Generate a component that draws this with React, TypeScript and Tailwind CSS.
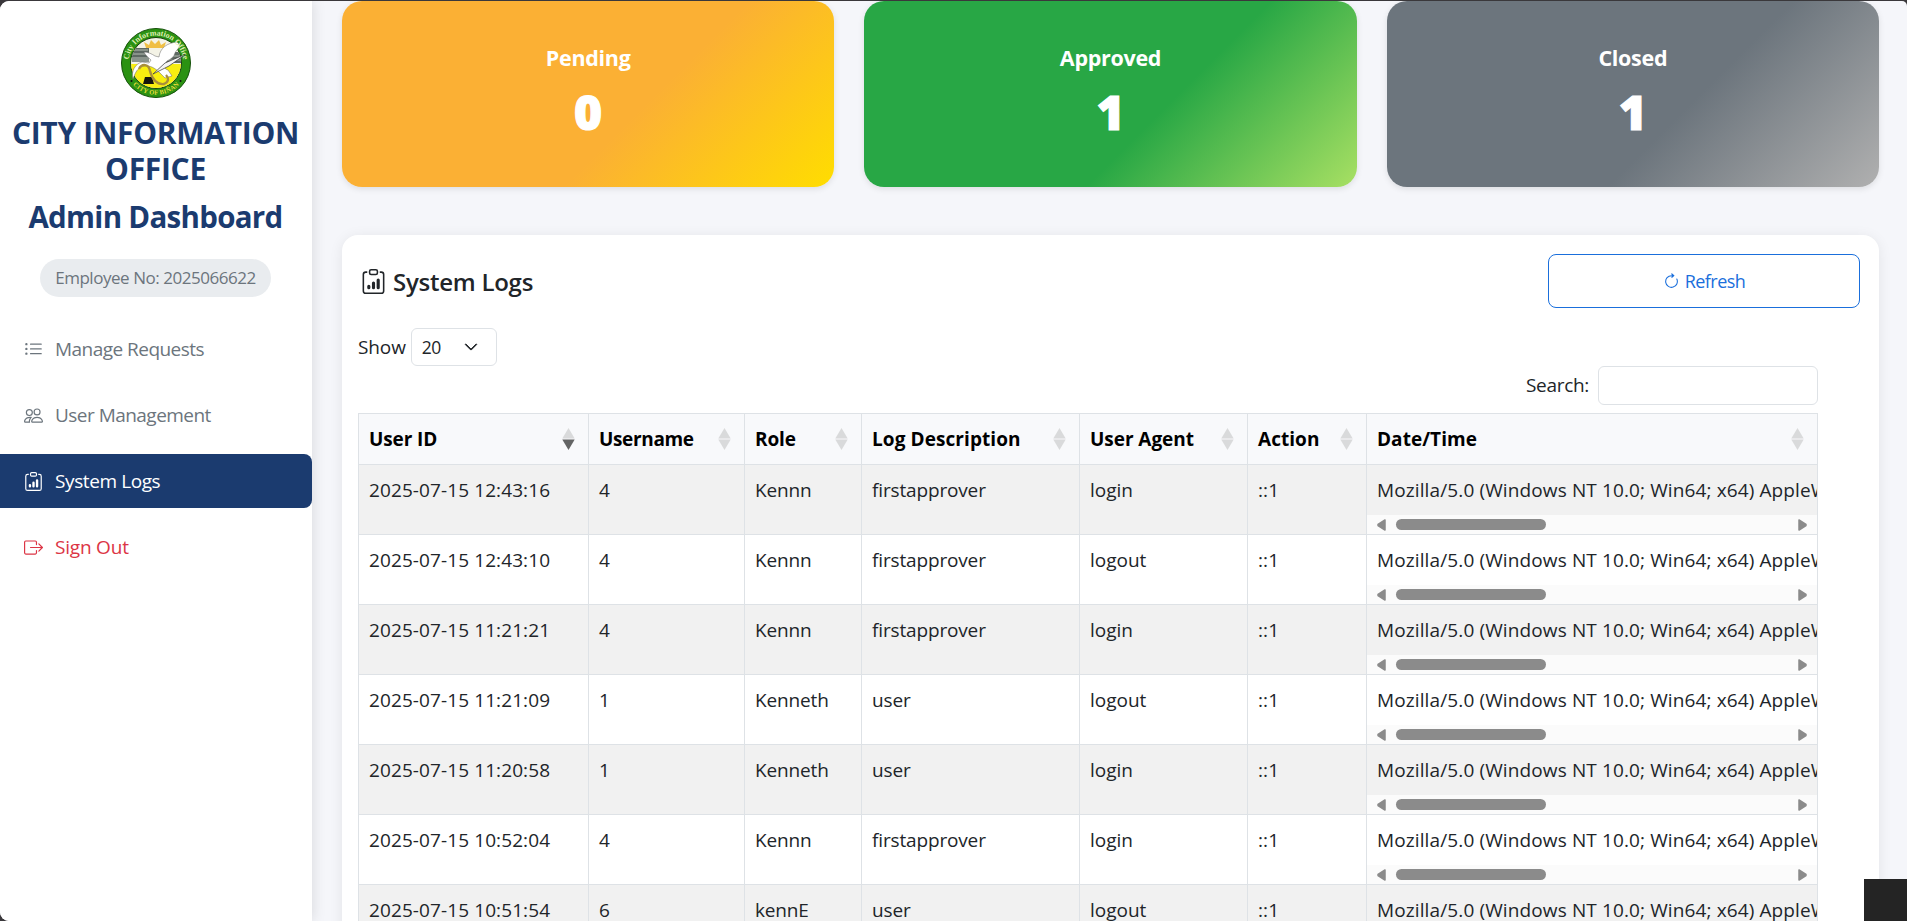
import React from 'react';
import { BsListUl, BsPeople, BsClipboardData, BsBoxArrowRight, BsArrowClockwise, BsChevronDown } from 'react-icons/bs';

const agent = 'Mozilla/5.0 (Windows NT 10.0; Win64; x64) AppleWebKit/537.36';

const rows = [
  ['2025-07-15 12:43:16', '4', 'Kennn', 'firstapprover', 'login', '::1'],
  ['2025-07-15 12:43:10', '4', 'Kennn', 'firstapprover', 'logout', '::1'],
  ['2025-07-15 11:21:21', '4', 'Kennn', 'firstapprover', 'login', '::1'],
  ['2025-07-15 11:21:09', '1', 'Kenneth', 'user', 'logout', '::1'],
  ['2025-07-15 11:20:58', '1', 'Kenneth', 'user', 'login', '::1'],
  ['2025-07-15 10:52:04', '4', 'Kennn', 'firstapprover', 'login', '::1'],
  ['2025-07-15 10:51:54', '6', 'kennE', 'user', 'logout', '::1'],
];

const cellTracking = [
  'tracking-[0.1px]',
  '',
  'tracking-[-0.15px]',
  'tracking-[-0.15px]',
  '',
  'tracking-[0.1px]',
];

const columns = [
  { label: 'User ID', tracking: 'tracking-[-0.1px]' },
  { label: 'Username', tracking: 'tracking-[-0.35px]' },
  { label: 'Role', tracking: 'tracking-[-0.1px]' },
  { label: 'Log Description', tracking: 'tracking-[0.08px]' },
  { label: 'User Agent', tracking: 'tracking-[-0.05px]' },
  { label: 'Action', tracking: 'tracking-[0.05px]' },
  { label: 'Date/Time', tracking: 'tracking-[0.05px]' },
];

const grid = 'grid grid-cols-[230px_156px_117px_218px_168px_119px_451px]';

function Seal() {
  return (
    <svg viewBox="0 0 70 70" className="h-[70px] w-[70px]">
      <defs>
        <path id="arcTop" d="M 7.5 35 A 27.5 27.5 0 0 1 62.5 35" />
        <path id="arcBottom" d="M 3.2 35 A 31.8 31.8 0 0 0 66.8 35" />
        <clipPath id="inner"><circle cx="35" cy="35" r="25" /></clipPath>
      </defs>
      <circle cx="35" cy="35" r="34.5" fill="#2b9212" stroke="#14500a" strokeWidth="1" />
      <circle cx="35" cy="35" r="25.5" fill="#f4f3e6" stroke="#173f0c" strokeWidth="1" />
      <g clipPath="url(#inner)">
        <rect x="8" y="36" width="54" height="28" fill="#f8ee10" />
        <path d="M25 20 L23 14 L28 17 L30 12 L34 16 L38 12 L40 17 L45 14 L43 20 Z" fill="#f0bf45" />
        <rect x="11" y="20" width="17" height="9" fill="#5d6862" />
        <rect x="11" y="29" width="17" height="5" fill="#8a948c" />
        <rect x="42" y="24" width="18" height="11" fill="#5d6862" />
        <path d="M12 22h15M12 26h15M43 28h17M43 32h17" stroke="#b5bdb2" strokeWidth="1" />
        <path d="M22 56 L24 49 L31 49 L33 56 Z" fill="#15150c" />
      </g>
      <path d="M12 51 C10 43 14 36 21 34 L28 35 L30 32 C27 29 24 27 23 24 C27 24 31 26 34 28 L38 29 C39 20 46 15 56 14 L59 17 C58 21 55 22 54 25 C53 29 50 31 46 33 C44 37 41 40 47 42 L51 48 L44 50 L38 44 C33 39 26 36 20 39 C15 42 14 46 12 51 Z" fill="#fff" stroke="#666" strokeWidth=".5" />
      <path d="M18 41 C21 35 28 36 29 43 C31 51 36 57 43 56 C48 54 48 50 45 47" fill="none" stroke="#a98f3c" strokeWidth="2.4" />
      <path d="M32 46 L44 35 L65 26 L48 38 Z" fill="#f4f4f4" stroke="#333" strokeWidth=".7" />
      <circle cx="10.500" cy="53" r="1" fill="#111" />
      <circle cx="59.500" cy="53" r="1" fill="#111" />
      <text fontFamily="Liberation Serif, serif" fontSize="8" fontWeight="700" fill="#dfeeb0">
        <textPath href="#arcTop" startOffset="50%" textAnchor="middle" textLength="80">City Information Office</textPath>
      </text>
      <text fontFamily="Liberation Serif, serif" fontSize="6.500" fontWeight="700" fill="#e6dc3a">
        <textPath href="#arcBottom" startOffset="50%" textAnchor="middle" textLength="52">CITY OF BIÑAN</textPath>
      </text>
    </svg>
  );
}

function SortIcon({ active }: { active?: boolean }) {
  return (
    <svg viewBox="0 0 13 22" className="h-[22px] w-[13px] shrink-0">
      <path d="M6.500 0 L12.700 10.500 H.3 Z" fill="#d9dadb" />
      <path d="M6.500 22 L12.700 11.500 H.3 Z" fill={active ? '#636464' : '#d9dadb'} />
    </svg>
  );
}

function ScrollBar() {
  return (
    <div className="flex h-[19px] items-center bg-[#fbfbfb] pr-[10px] pl-[10px] text-[#8b8b8b]">
      <svg viewBox="0 0 9 12" className="h-3 w-[9px]"><path d="M8 1 V11 L1 6.500 V5.500 Z" fill="currentColor" stroke="currentColor" strokeWidth="1.500" strokeLinejoin="round" /></svg>
      <div className="ml-[10px] h-[11px] w-[150px] rounded-full bg-[#8b8b8b]" />
      <svg viewBox="0 0 9 12" className="ml-auto h-3 w-[9px]"><path d="M1 1 V11 L8 6.500 V5.500 Z" fill="currentColor" stroke="currentColor" strokeWidth="1.500" strokeLinejoin="round" /></svg>
    </div>
  );
}

function NavItem({ icon, label, className }: { icon: React.ReactNode; label: string; className: string }) {
  return (
    <a className={`flex h-[54px] items-center gap-3 rounded-r-lg pl-6 text-[19px] ${className}`}>
      {icon}
      <span className="pt-px">{label}</span>
    </a>
  );
}

function StatCard({ label, value, className }: { label: string; value: string; className: string }) {
  return (
    <div className={`flex h-[186px] flex-col items-center rounded-[20px] pt-[40px] text-white shadow-[0_2px_6px_rgba(0,0,0,0.1)] ${className}`}>
      <div className="text-[21.500px] leading-[33px] font-bold tracking-[-0.3px]">{label}</div>
      <div className="mt-2 text-[48px] leading-[60px] font-extrabold [-webkit-text-stroke:1.2px_white]">{value}</div>
    </div>
  );
}

export default function App() {
  return (
    <div className="h-[921px] w-[1907px] overflow-hidden bg-[#3a383b] pt-px font-['Open_Sans','Noto_Sans',sans-serif] text-[#212529]">
      <div className="relative flex h-[920px] overflow-hidden rounded-tl-[9px] rounded-tr-[5px] rounded-bl-[9px] bg-[#f5f6fa]">
        <aside className="z-10 flex w-[312px] shrink-0 flex-col bg-white shadow-[2px_0_12px_rgba(0,0,0,0.1)]">
          <div className="flex flex-col items-center pr-px pt-[27px] text-[#1b3b6f]">
            <Seal />
            <h2 className="mt-[17px] text-center text-[30px] leading-9 font-bold tracking-[-0.3px] whitespace-nowrap">CITY INFORMATION<br />OFFICE</h2>
            <h2 className="mt-3 text-[29.500px] leading-9 font-bold tracking-[-0.7px] whitespace-nowrap">Admin Dashboard</h2>
            <div className="mt-6 flex h-[38px] w-[231px] items-center justify-center rounded-full bg-[#e9ecef] text-[17px] tracking-[-0.46px] whitespace-nowrap text-[#6c757d]">Employee No: 2025066622</div>
          </div>
          <nav className="mt-[25px] flex flex-col gap-3">
            <NavItem icon={<BsListUl className="h-[19px] w-[19px]" />} label="Manage Requests" className="tracking-[-0.53px] text-[#6c757d]" />
            <NavItem icon={<BsPeople className="h-[19px] w-[19px]" />} label="User Management" className="tracking-[-0.53px] text-[#6c757d]" />
            <NavItem icon={<BsClipboardData className="h-[19px] w-[19px]" />} label="System Logs" className="bg-[#1b3b6f] tracking-[-0.4px] text-white" />
            <NavItem icon={<BsBoxArrowRight className="h-[19px] w-[19px]" />} label="Sign Out" className="tracking-[-0.2px] text-[#dc3545]" />
          </nav>
        </aside>

        <main className="flex min-w-0 flex-1 flex-col pr-7 pl-[30px]">
          <div className="grid grid-cols-3 gap-[30px]">
            <StatCard label="Pending" value="0" className="bg-[linear-gradient(135deg,#fbb034_60%,#ffdd00_100%)]" />
            <StatCard label="Approved" value="1" className="bg-[linear-gradient(135deg,#28a745_60%,#a8e063_100%)]" />
            <StatCard label="Closed" value="1" className="bg-[linear-gradient(135deg,#6c757d_60%,#b0b0b0_100%)]" />
          </div>

          <section className="mt-12 h-[740px] shrink-0 rounded-t-[16px] bg-white pt-[19px] pr-[19px] pl-4 shadow-[0_2px_14px_rgba(0,0,0,0.08)]">
            <div className="flex items-center justify-between">
              <h4 className="flex items-center gap-[7px] pl-[3px] text-[24px] font-semibold tracking-[-0.25px]">
                <BsClipboardData className="h-[25px] w-[25px]" />
                <span className="pt-px">System Logs</span>
              </h4>
              <button className="flex h-[54px] w-[312px] items-center justify-center gap-[5px] rounded-lg border border-[#1a6fdc] text-[18px] tracking-[-0.55px] text-[#1a6fdc]">
                <BsArrowClockwise className="h-[17px] w-[17px]" />
                <span>Refresh</span>
              </button>
            </div>
            <div className="mt-5 flex h-[38px] items-center gap-[5px] text-[19px]">
              <span className="tracking-[-0.1px]">Show</span>
              <div className="flex h-[38px] w-[86px] items-center justify-between rounded-md border border-[#dee2e6] pr-[18px] pl-[10px] text-[17.500px] tracking-[-0.5px]">
                <span>20</span>
                <BsChevronDown className="h-[14px] w-[14px] stroke-[1]" />
              </div>
            </div>
            <div className="flex h-[39px] w-[1460px] items-center justify-end gap-[9px] text-[19px]">
              <span className="tracking-[-0.3px]">Search:</span>
              <input className="h-[39px] w-[220px] rounded-md border border-[#dee2e6] bg-white" />
            </div>

            <div className="mt-2 w-[1460px] border-t border-l border-[#dee2e6] text-[19px]">
              <div className={`${grid} h-[51px] bg-[#f8f9fb] font-bold text-black`}>
                {columns.map((c, i) => (
                  <div key={c.label} className="flex items-center justify-between border-r border-b border-[#dee2e6] pr-[13px] pl-[10px]">
                    <span className={`pt-px whitespace-nowrap ${c.tracking}`}>{c.label}</span>
                    <SortIcon active={i === 0} />
                  </div>
                ))}
              </div>
              {rows.map((r, i) => (
                <div key={r[0]} className={`${grid} h-[70px] leading-[30px] ${i % 2 === 0 ? 'bg-[#f1f1f1]' : 'bg-white'}`}>
                  {r.map((v, j) => (
                    <div key={j} className={`border-r border-b border-[#dee2e6] pt-[10px] pl-[10px] whitespace-nowrap ${cellTracking[j]}`}>{v}</div>
                  ))}
                  <div className="flex flex-col justify-between overflow-hidden border-r border-b border-[#dee2e6]">
                    <div className="overflow-hidden pt-[10px] pl-[10px] tracking-[0.12px] whitespace-nowrap">{agent}</div>
                    <ScrollBar />
                  </div>
                </div>
              ))}
            </div>
          </section>
        </main>
        <div className="absolute right-0 bottom-0 z-20 h-[42px] w-[43px] bg-[#242424]" />
      </div>
    </div>
  );
}
